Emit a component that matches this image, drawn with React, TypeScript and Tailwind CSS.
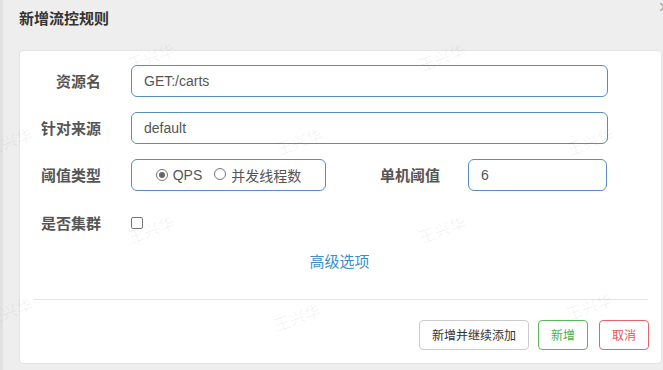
import React from "react"

const cjk = { fontFamily: '"Noto Sans CJK SC", "Noto Sans", sans-serif' }
const latin = { fontFamily: '"Liberation Sans", Arial, "Noto Sans CJK SC", sans-serif' }

const marks = [
  [152, 55], [443, 56],
  [10, 140], [300, 140], [591, 140],
  [152, 228], [443, 228],
  [10, 310], [298, 316], [590, 305],
]

const Label = ({ children, w = "w-[81px]" }: { children: React.ReactNode; w?: string }) => (
  <div style={cjk} className={`${w} shrink-0 text-right text-[15px] font-bold text-[#555]`}>{children}</div>
)

const Radio = ({ checked }: { checked?: boolean }) => (
  <span className="inline-flex w-[12px] h-[12px] rounded-full border border-[#767676] bg-white items-center justify-center">
    {checked && <span className="w-[6px] h-[6px] rounded-full bg-[#666]" />}
  </span>
)

export default function App() {
  return (
    <div className="relative w-[663px] h-[370px] overflow-hidden bg-[#eeeeee] flex">
      <div className="w-[3px] shrink-0 bg-[#e1e1e1]" />
      <div className="flex-1 flex flex-col pl-[16px] pr-[1px]">
        <div style={cjk} className="h-[50px] pt-[7px] text-[15px] font-bold text-[#333]">新增流控规则</div>

        <div className="bg-white rounded-[4px] border border-[#e4e4e4] h-[314px] flex flex-col pt-[14px]">
          <div className="flex items-center h-[32px]">
            <Label>资源名</Label>
            <div style={latin} className="ml-[30px] w-[477px] h-[32px] rounded-[6px] border border-[#5b8cc0] px-[12px] flex items-center text-[14px] text-[#555]">GET:/carts</div>
          </div>

          <div className="flex items-center h-[32px] mt-[15px]">
            <Label>针对来源</Label>
            <div style={latin} className="ml-[30px] w-[477px] h-[32px] rounded-[6px] border border-[#5b8cc0] px-[12px] flex items-center text-[14px] text-[#555]">default</div>
          </div>

          <div className="flex items-center h-[32px] mt-[15px]">
            <Label>阈值类型</Label>
            <div style={latin} className="ml-[30px] w-[195px] h-[32px] rounded-[6px] border border-[#5b8cc0] flex items-center justify-center gap-[5px] text-[14px] text-[#555]">
              <Radio checked />
              <span>QPS</span>
              <span className="ml-[7px]"><Radio /></span>
              <span style={cjk}>并发线程数</span>
            </div>
            <Label w="w-[114px]">单机阈值</Label>
            <div style={latin} className="ml-[28px] w-[139px] h-[32px] rounded-[6px] border border-[#5b8cc0] px-[12px] flex items-center text-[14px] text-[#555]">6</div>
          </div>

          <div className="flex items-center h-[32px] mt-[16px]">
            <Label>是否集群</Label>
            <span className="ml-[30px] w-[12px] h-[12px] rounded-[2px] border border-[#767676] bg-white" />
          </div>

          <div style={cjk} className="mt-[11px] h-[20px] flex justify-center text-[15px] text-[#3c8dcc]">
            <span className="ml-[-2px]">高级选项</span>
          </div>

          <div className="mt-[29px] ml-[14px] mr-[13px] h-px bg-[#e5e5e5]" />

          <div style={cjk} className="mt-[20px] mr-[12px] flex justify-end gap-[9px] text-[12px]">
            <button className="h-[30px] px-[12px] rounded-[4px] border border-[#cccccc] text-[#333] bg-white">新增并继续添加</button>
            <button className="h-[30px] px-[12px] rounded-[4px] border border-[#5cb85c] text-[#4cae4c] bg-white">新增</button>
            <button className="ml-[2px] h-[30px] px-[12px] rounded-[4px] border border-[#e5636b] text-[#e5535d] bg-white">取消</button>
          </div>
        </div>
      </div>

      <span className="absolute right-[-7px] top-[-3px] text-[20px] leading-none text-[#aaa]">×</span>

      {marks.map(([x, y], i) => (
        <span key={i} style={{ ...cjk, left: x - 25, top: y - 11 }}
          className="absolute pointer-events-none text-[16px] text-black/[0.06] rotate-[-20deg]">
          王兴华
        </span>
      ))}
    </div>
  )
}
